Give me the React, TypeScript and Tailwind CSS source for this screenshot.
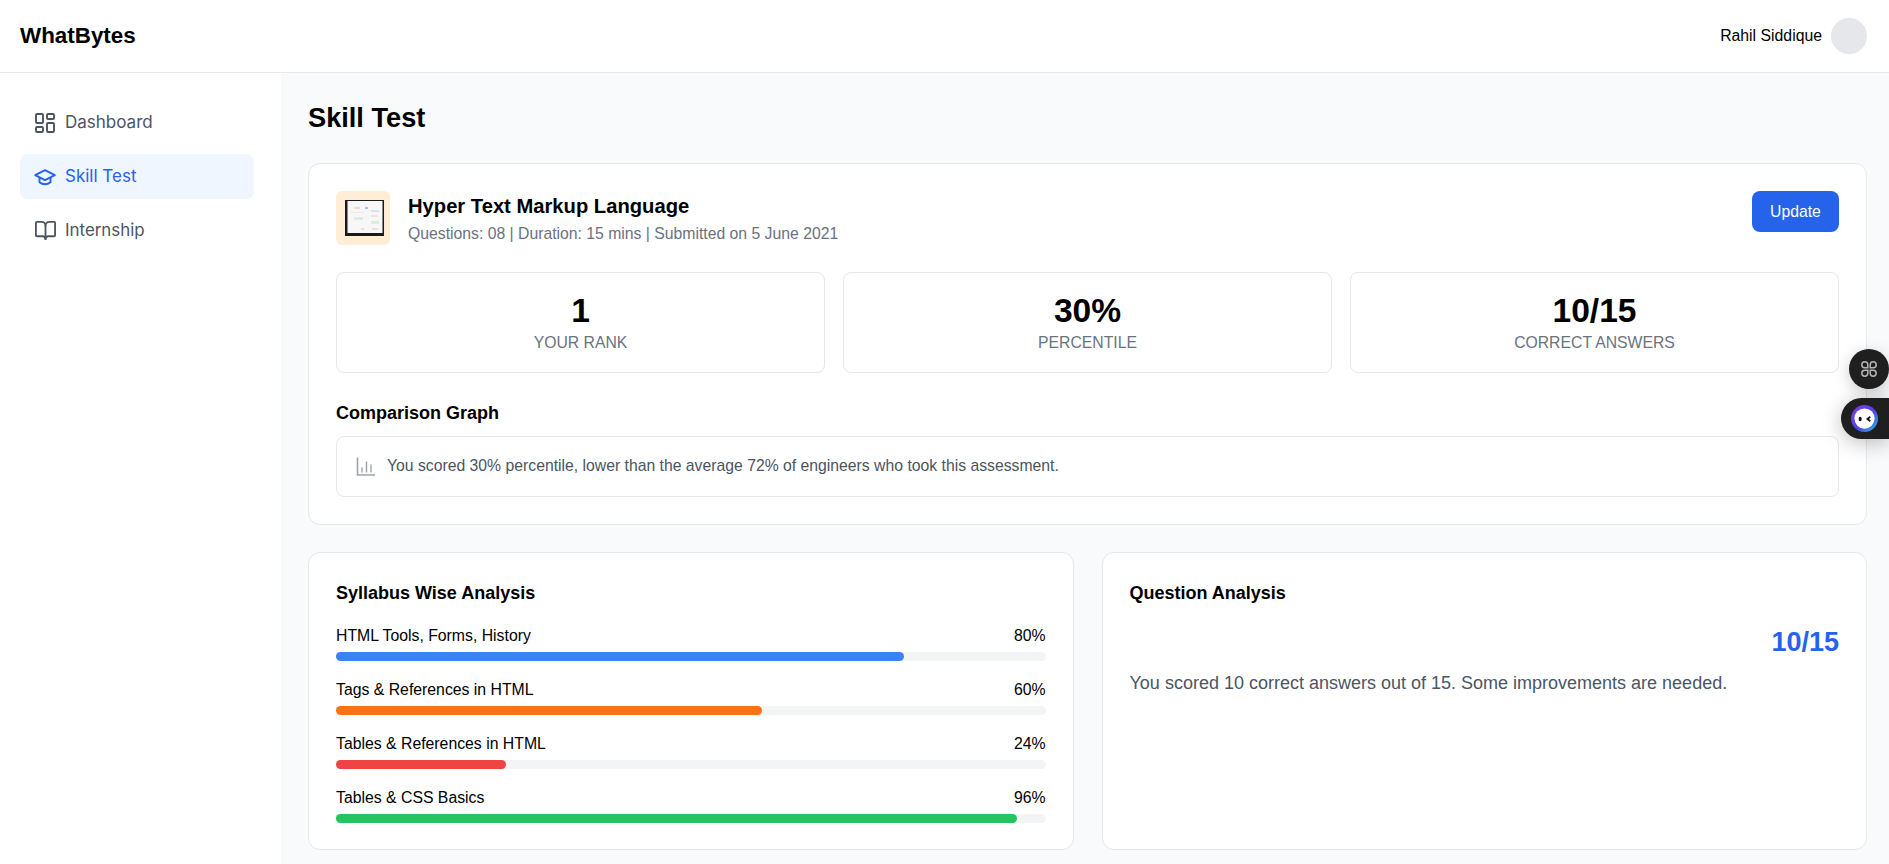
import { BookOpen, LayoutDashboard } from "lucide-react";

const arial = "font-['Liberation_Sans',Arial,sans-serif]";

const stats = [
  { value: "1", label: "YOUR RANK" },
  { value: "30%", label: "PERCENTILE" },
  { value: "10/15", label: "CORRECT ANSWERS" },
];

const syllabus = [
  { name: "HTML Tools, Forms, History", pct: 80, bar: "bg-[#3b82f6]" },
  { name: "Tags & References in HTML", pct: 60, bar: "bg-[#f97316]" },
  { name: "Tables & References in HTML", pct: 24, bar: "bg-[#ef4444]" },
  { name: "Tables & CSS Basics", pct: 96, bar: "bg-[#22c55e]" },
];

function Thumb() {
  return (
    <div className="flex h-[54px] w-[54px] shrink-0 items-center justify-center rounded-md bg-[#ffedd5]">
      <svg width="39" height="36" viewBox="0 0 39 36" className="ml-[2px]">
        <rect width="39" height="36" fill="#1a1a1a" />
        <rect x="2.5" y="1" width="35" height="32" fill="#f7f7f7" />
        <rect x="9" y="7" width="6" height="2" fill="#f5d5d5" />
        <rect x="20" y="7" width="3" height="2" fill="#a9bdee" />
        <rect x="26" y="10" width="8" height="2" fill="#d5e2f6" />
        <rect x="9" y="17" width="9" height="3" fill="#e6e6e6" />
        <rect x="26" y="21" width="8" height="3" fill="#d8efdc" />
        <rect x="26" y="15" width="7" height="2" fill="#f6dfd2" />
        <rect x="5" y="12" width="14" height="1" fill="#ebebeb" />
        <rect x="16" y="28" width="3" height="2" fill="#e4e4e4" />
        <rect x="27" y="28" width="6" height="2" fill="#e4e4e4" />
      </svg>
    </div>
  );
}

function ChartIcon() {
  return (
    <svg width="20" height="20" viewBox="0 0 20 20" className="shrink-0" fill="none" stroke="#9ca3af">
      <path d="M1.5 0.5v17.5h17.5" strokeWidth="1.6" />
      <path d="M6 10.5v5M10.5 4.5v11M15 7.5v8" strokeWidth="1.4" />
    </svg>
  );
}

function CapIcon() {
  return (
    <svg width="24" height="24" viewBox="0 0 24 24" fill="none" stroke="currentColor" strokeWidth="1.9" strokeLinejoin="round" className="shrink-0">
      <path d="M2.2 10.2 12 5.2l9.8 5-9.8 5z" />
      <path d="M6.5 13v4.2c1.5 1.2 3.4 2 5.5 2s4-.8 5.5-2V13" />
    </svg>
  );
}

function Widgets() {
  return (
    <>
      <div className="absolute right-0 top-[349px] flex h-10 w-10 items-center justify-center rounded-full bg-[#1f1f1f] shadow-[0_4px_16px_rgba(0,0,0,0.2)]">
        <svg width="18" height="18" viewBox="0 0 18 18" fill="none" stroke="#b5b5b5" strokeWidth="1.5">
          <path d="M7.8 7.8H4.6a3 3 0 1 1 3.2-3.2z" />
          <path d="M10.2 7.8h3.2a3 3 0 1 0-3.2-3.2z" />
          <path d="M7.8 10.2H4.6a3 3 0 1 0 3.2 3.2z" />
          <path d="M10.2 10.2h3.2a3 3 0 1 1-3.2 3.2z" />
        </svg>
      </div>
      <div className="absolute right-0 top-[398px] flex h-[41px] w-[48px] items-center rounded-l-full bg-[#1f1f1f] pl-[10px] shadow-[0_4px_20px_rgba(0,0,0,0.25)]">
        <svg width="27" height="27" viewBox="0 0 28 28">
          <defs>
            <linearGradient id="ring" x1="0" y1="0" x2="1" y2="1">
              <stop offset="0" stopColor="#7c3aed" />
              <stop offset="0.55" stopColor="#4f46e5" />
              <stop offset="1" stopColor="#22c1dc" />
            </linearGradient>
          </defs>
          <circle cx="14" cy="14" r="14" fill="url(#ring)" />
          <circle cx="14" cy="14" r="10.5" fill="#fff" />
          <ellipse cx="9.5" cy="14.5" rx="1.6" ry="2.4" fill="#111" />
          <path d="M20 12.2l-3 2.3 3 2.3" fill="none" stroke="#111" strokeWidth="1.8" />
        </svg>
      </div>
    </>
  );
}

export default function App() {
  return (
    <div className={`relative flex h-screen flex-col overflow-hidden bg-white text-black ${arial}`}>
      <header className="flex h-[73px] shrink-0 items-center justify-between border-b border-[#e5e7eb] bg-white pl-5 pr-[22px]">
        <div className="text-[22.4px] font-bold leading-none">WhatBytes</div>
        <div className="flex items-center gap-[9px]">
          <span className="text-[15.8px]">Rahil Siddique</span>
          <div className="h-9 w-9 rounded-full bg-[#e5e7eb]" />
        </div>
      </header>
      <div className="flex min-h-0 flex-1">
        <aside className="w-[281px] shrink-0 bg-white pl-5 pr-[27px] pt-[27px] font-['Inter',sans-serif]">
          <nav className="flex flex-col gap-[9px]">
            <a className="flex h-[45px] items-center gap-2 rounded-lg px-[13px] text-[17px] text-[#4b5563]">
              <LayoutDashboard size={24} strokeWidth={1.9} />
              Dashboard
            </a>
            <a className="flex h-[45px] items-center gap-2 rounded-lg bg-[#eff6ff] px-[13px] text-[17px] text-[#2563eb]">
              <CapIcon />
              Skill Test
            </a>
            <a className="flex h-[45px] items-center gap-2 rounded-lg px-[13px] text-[16.9px] text-[#4b5563]">
              <BookOpen size={23} strokeWidth={1.9} className="ml-[1px]" />
              Internship
            </a>
          </nav>
        </aside>
        <main className="flex-1 bg-[#f9fafb] pl-[27px] pr-[22px] pt-[29px]">
          <h1 className="text-[27.2px] font-bold leading-8">Skill Test</h1>
          <section className="mt-[29px] rounded-xl border border-[#e5e7eb] bg-white p-[27px]">
            <div className="flex items-start justify-between">
              <div className="flex h-[54px] items-start gap-[18px]">
                <Thumb />
                <div className="pt-[1px]">
                  <div className="text-[20.2px] font-bold leading-7">Hyper Text Markup Language</div>
                  <div className="mt-[2px] text-[15.75px] leading-6 text-[#6b7280]">
                    Questions: 08 | Duration: 15 mins | Submitted on 5 June 2021
                  </div>
                </div>
              </div>
              <button className="h-[41px] w-[87px] rounded-lg bg-[#2563eb] text-[15.75px] text-white">Update</button>
            </div>
            <div className="mt-[27px] grid grid-cols-3 gap-[18px]">
              {stats.map((s) => (
                <div key={s.label} className="flex h-[101px] flex-col items-center justify-center rounded-lg border border-[#e5e7eb]">
                  <div className="text-[33.6px] font-bold leading-10">{s.value}</div>
                  <div className="text-[15.75px] leading-6 text-[#6b7280]">{s.label}</div>
                </div>
              ))}
            </div>
            <div className="mt-[28px] text-lg font-bold leading-6">Comparison Graph</div>
            <div className="mt-[11px] flex h-[61px] items-center gap-[11px] rounded-lg border border-[#e5e7eb] px-[19px] text-[15.75px] text-[#4b5563]">
              <ChartIcon />
              <span className="mb-0.5">
                You scored 30% percentile, lower than the average 72% of engineers who took this assessment.
              </span>
            </div>
          </section>
          <div className="mt-[27px] grid grid-cols-2 gap-7">
            <section className="h-[298px] rounded-xl border border-[#e5e7eb] bg-white px-[27px] pt-[28px]">
              <div className="text-lg font-bold leading-6">Syllabus Wise Analysis</div>
              <div className="mt-[19px] flex flex-col gap-[17px]">
                {syllabus.map((s) => (
                  <div key={s.name}>
                    <div className="flex justify-between text-[15.8px] leading-6">
                      <span>{s.name}</span>
                      <span>{s.pct}%</span>
                    </div>
                    <div className="mt-[4px] h-[9px] rounded-full bg-[#f3f4f6]">
                      <div className={`h-full rounded-full ${s.bar}`} style={{ width: `${s.pct}%` }} />
                    </div>
                  </div>
                ))}
              </div>
            </section>
            <section className="h-[298px] rounded-xl border border-[#e5e7eb] bg-white px-[27px] pt-[28px]">
              <div className="text-lg font-bold leading-6">Question Analysis</div>
              <div className="mt-[21px] text-right text-[27px] font-bold leading-8 text-[#2563eb]">10/15</div>
              <div className="mt-[11px] text-lg leading-7 text-[#4b5563]">
                You scored 10 correct answers out of 15. Some improvements are needed.
              </div>
            </section>
          </div>
        </main>
      </div>
      <Widgets />
    </div>
  );
}
